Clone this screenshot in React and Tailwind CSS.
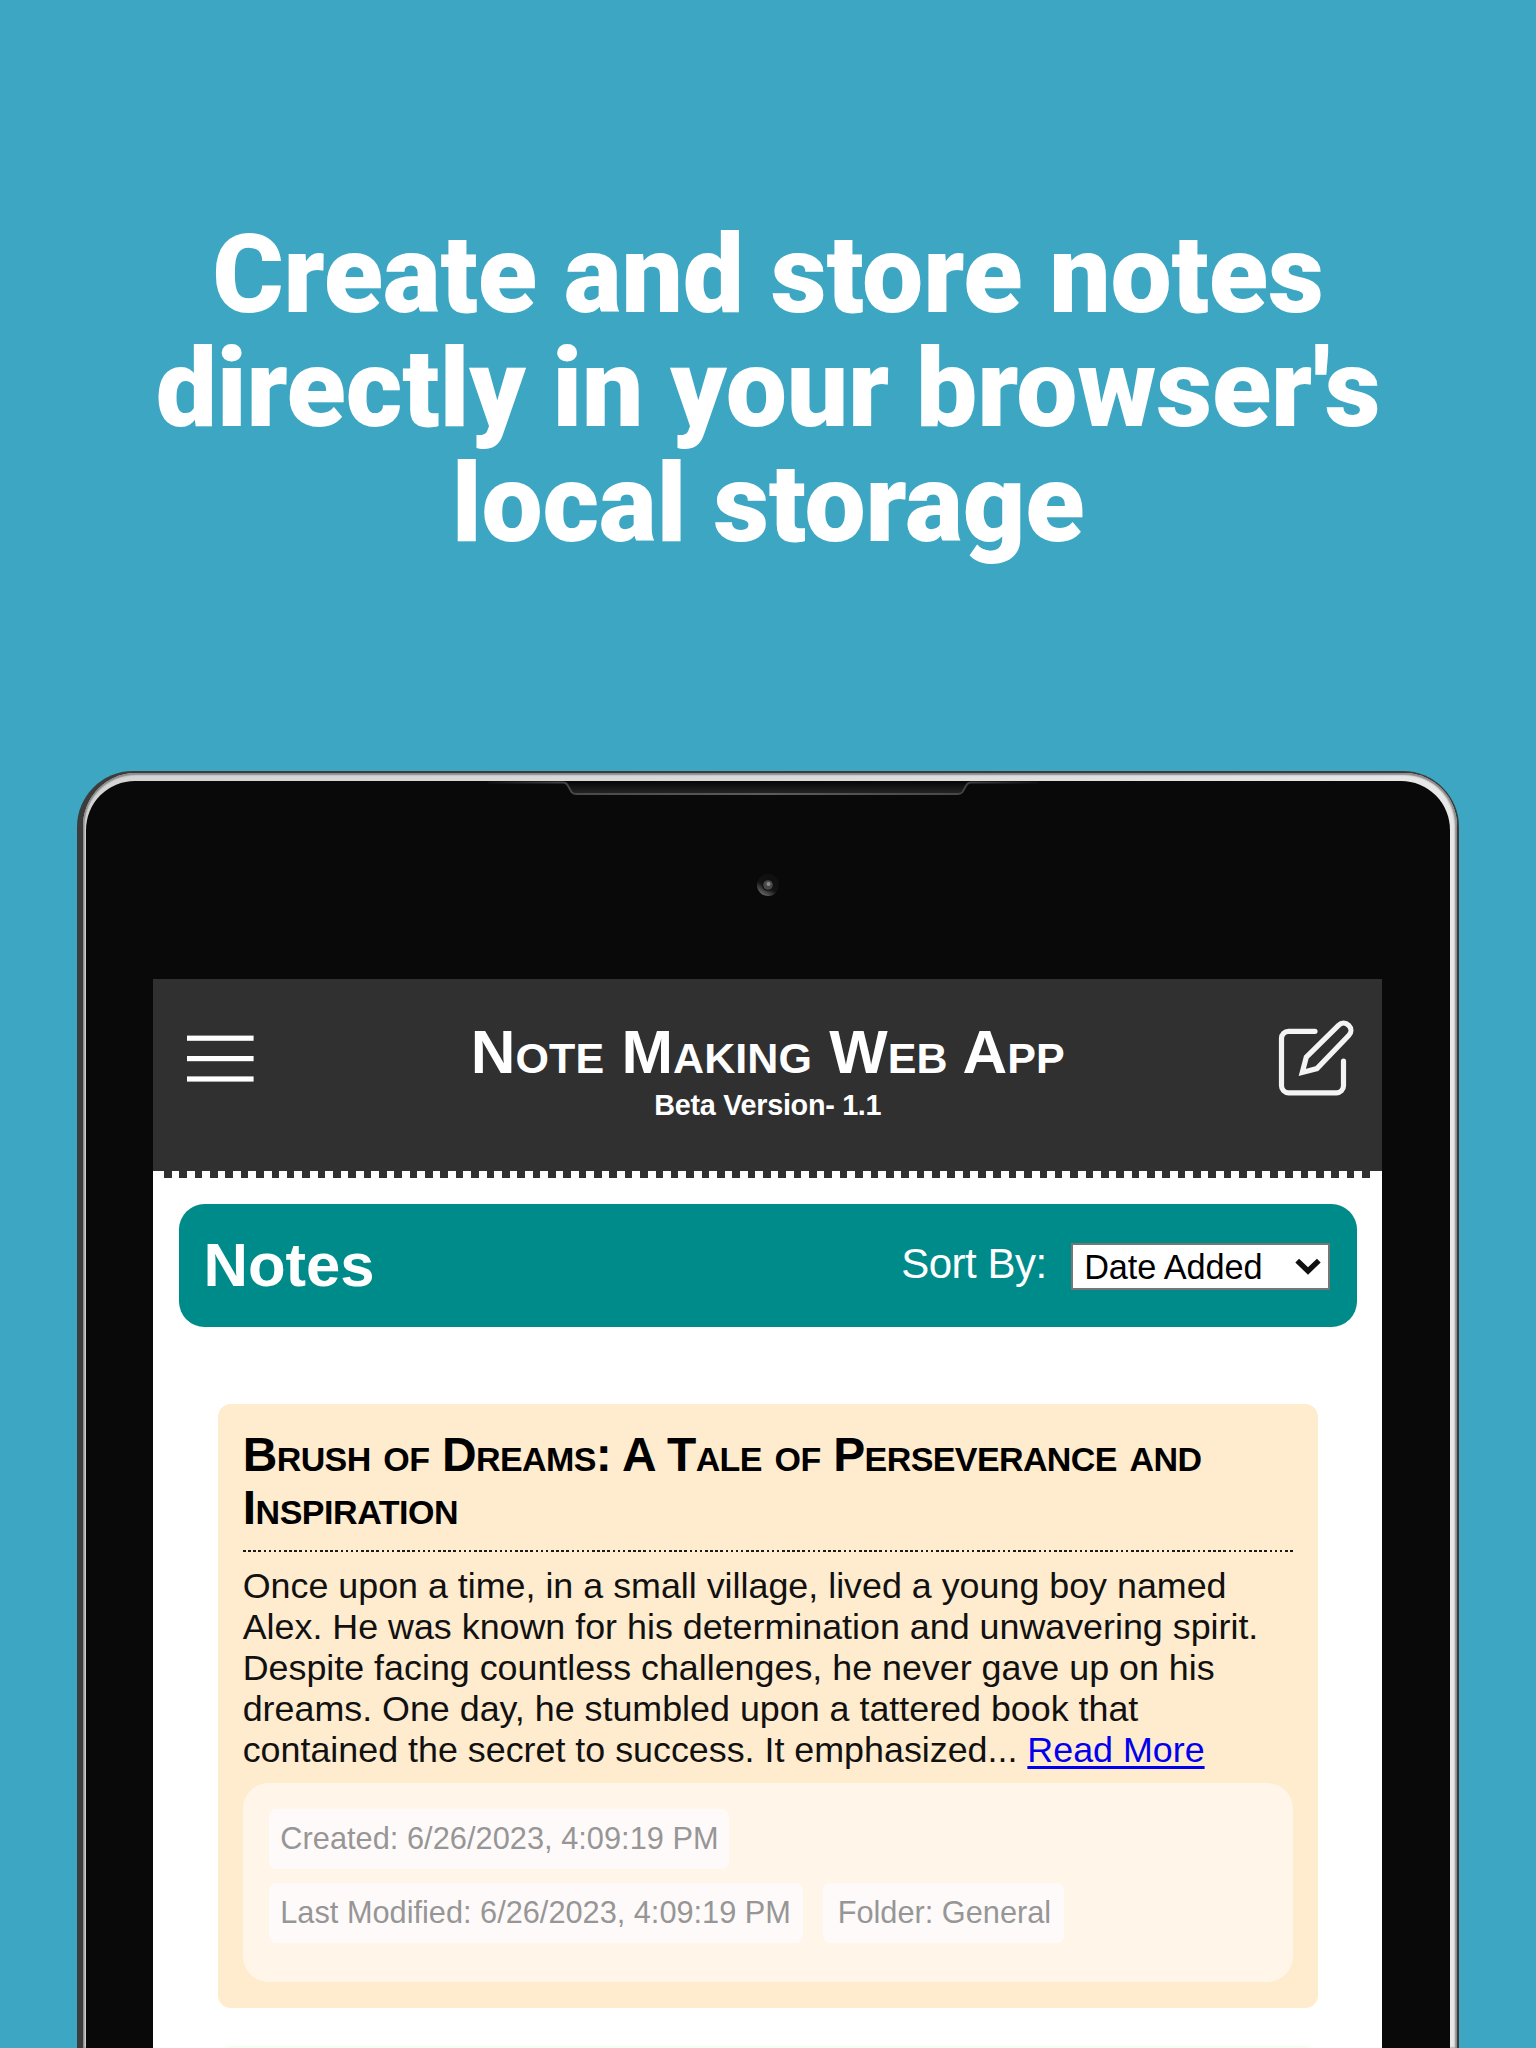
function MenuIcon() {
  return (
    <svg className="ml-[6px] mt-[54px] h-[50px] w-[67px]" viewBox="0 0 67 50" fill="#fff">
      <rect x="0" y="2.6" width="66.6" height="5.2" />
      <rect x="0" y="23" width="66.6" height="5.2" />
      <rect x="0" y="43.4" width="66.6" height="5.2" />
    </svg>
  );
}

function EditIcon() {
  return (
    <svg
      className="mt-[39px] h-[80px] w-[80px] justify-self-end"
      viewBox="0 0 80 80"
      fill="none"
      stroke="#f4f4f4"
      strokeWidth="5.2"
      strokeLinecap="round"
      strokeLinejoin="round"
    >
      <path d="M41 13.3H14.5a7 7 0 0 0-7 7V67.8a7 7 0 0 0 7 7H62.5a7 7 0 0 0 7-7V43" />
      <path strokeLinejoin="miter" d="M28.3 54.4l4-15.2L64.5 7.3c2.9-2.9 7.2-2.9 10.2 0s2.9 7.2 0 10.2L42.9 50.6z" />
    </svg>
  );
}

function Header() {
  return (
    <header className="bg-[#303030] text-white">
      <div className="grid h-[192px] grid-cols-[80px_1fr_80px] items-start px-[28px]">
        <MenuIcon />
        <div className="pt-[41.3px] text-center font-bold whitespace-nowrap">
          <h1 className="text-[61.9px] leading-[64px] tracking-[0.07px] [font-variant-caps:small-caps]">
            Note Making Web App
          </h1>
          <p className="mt-[5px] text-[28.8px] leading-[32px] tracking-[-0.3px]">Beta Version- 1.1</p>
        </div>
        <EditIcon />
      </div>
      <div className="h-[7.7px] bg-white px-[10.2px]">
        <div className="h-full w-[1206px] bg-[repeating-linear-gradient(90deg,#303030_0_7.6px,#fff_7.6px_15.36px)]" />
      </div>
    </header>
  );
}

function Toolbar() {
  return (
    <div className="mx-[25.6px] mt-[25.6px] flex h-[123.3px] items-center justify-between rounded-[25.6px] bg-[#008b8b] pr-[26.5px] pb-[2px] pl-[24.5px] text-white">
      <h2 className="text-[61.6px] leading-[64px] font-bold">Notes</h2>
      <div className="flex items-center gap-6">
        <span className="pb-[1px] text-[42px] leading-[48px] tracking-[-0.5px]">Sort By:</span>
        <div className="mt-[4px] flex h-[47px] w-[259.5px] items-center justify-between border-[2.5px] border-[#767676] bg-white pr-[7px] pl-[11.5px] text-[34.3px] leading-[40px] tracking-[-0.1px] text-black">
          <span>Date Added</span>
          <svg className="h-[18px] w-[26px]" viewBox="0 0 26 18" fill="none" stroke="#111" strokeWidth="5.4">
            <path d="M2.2 2.6L13 13L23.8 2.6" />
          </svg>
        </div>
      </div>
    </div>
  );
}

function NoteCard() {
  return (
    <article className="mx-[64.3px] mt-[76.4px] rounded-[13px] bg-[#ffebcd] px-[25px] pt-[24px] pb-[26px] whitespace-nowrap text-black">
      <h3 className="text-[47.9px] leading-[53.5px] font-bold [font-variant-caps:small-caps]">
        <span className="block tracking-[-0.6px]">Brush of Dreams: A Tale of Perseverance and</span>
        <span className="block tracking-[-0.45px]">Inspiration</span>
      </h3>
      <div className="mt-[15px] h-[2.6px] bg-[repeating-linear-gradient(90deg,#1c1a17_0_2.56px,transparent_2.56px_5.133px)]" />
      <p className="mt-[13.8px] text-[35.84px] leading-[40.9px] text-[#111]">
        Once upon a time, in a small village, lived a young boy named
        <br />
        Alex. He was known for his determination and unwavering spirit.
        <br />
        Despite facing countless challenges, he never gave up on his
        <br />
        dreams. One day, he stumbled upon a tattered book that
        <br />
        contained the secret to success. It emphasized...{" "}
        <a className="text-[#0000ee] underline decoration-[2.6px] underline-offset-[3.5px]">Read More</a>
      </p>
      <div className="mt-[12px] flex h-[199.3px] flex-wrap content-start gap-x-[20.5px] gap-y-[13.8px] rounded-[25.6px] bg-[#fff5e9] px-[26px] pt-[26px] text-[30.72px] leading-[60.5px] text-[#969696]">
        <div className="w-full">
          <span className="inline-block rounded-[7.7px] bg-[#fffafa] pr-[10.5px] pl-[11.6px] align-top tracking-[0.04px]">
            Created: 6/26/2023, 4:09:19 PM
          </span>
        </div>
        <span className="rounded-[7.7px] bg-[#fffafa] pr-[12px] pl-[11.6px]">
          Last Modified: 6/26/2023, 4:09:19 PM
        </span>
        <span className="rounded-[7.7px] bg-[#fffafa] pr-[13px] pl-[14.3px]">Folder: General</span>
      </div>
    </article>
  );
}

function Bezel() {
  return (
    <svg className="absolute top-0 left-[382px] h-[120px] w-[600px]" viewBox="0 0 600 120" fill="none">
      <defs>
        <linearGradient id="edge" x1="0" x2="1" y1="0" y2="0">
          <stop offset="0" stopColor="#111" />
          <stop offset="0.15" stopColor="#484848" />
          <stop offset="0.5" stopColor="#5c5c5c" />
          <stop offset="0.85" stopColor="#484848" />
          <stop offset="1" stopColor="#111" />
        </linearGradient>
        <linearGradient id="slot" x1="0" x2="0" y1="0" y2="1">
          <stop offset="0" stopColor="#090909" />
          <stop offset="1" stopColor="#262626" />
        </linearGradient>
        <linearGradient id="ring" x1="0.25" x2="0.6" y1="0.95" y2="0.35">
          <stop offset="0" stopColor="#686868" />
          <stop offset="0.6" stopColor="#141414" />
          <stop offset="1" stopColor="#101010" />
        </linearGradient>
      </defs>
      <path d="M97 1.5L105 13H491L503 1.5Z" fill="url(#slot)" />
      <path
        d="M20 1.5H95Q98 1.5 99.5 4L103.5 11Q105 13 108 13H490Q493 13 494.5 11L498.5 4Q500 1.5 503 1.5H570"
        stroke="url(#edge)"
        strokeWidth="2"
      />
      <circle cx="300" cy="104" r="11" fill="url(#ring)" />
      <circle cx="300" cy="104" r="6" fill="#111" />
      <circle cx="300" cy="104" r="4.8" fill="#484848" />
      <circle cx="300.5" cy="103" r="2" fill="#8a8a8a" />
    </svg>
  );
}

export default function App() {
  return (
    <main className="flex h-[2048px] w-[1536px] flex-col overflow-hidden bg-[#3ca6c3] [font-family:'Liberation_Sans',Arial,sans-serif]">
      <h1 className="h-[771px] shrink-0 pt-[218px] text-center text-[108.9px] leading-[114.4px] font-black tracking-[-0.18px] whitespace-nowrap text-white [font-family:Roboto,sans-serif]">
        Create and store notes
        <br />
        directly in your browser's
        <br />
        local storage
      </h1>
      <div className="mr-[76.7px] ml-[77px] h-[1277px] overflow-hidden rounded-t-[56px] bg-[#3c3c3c] pt-[1.5px] pr-[2.3px] pl-[5.5px]">
        <div className="h-full rounded-t-[53px] bg-linear-to-r from-[#d4d4d4] via-[#dadada] to-[#e8e8e8] pt-[8px] pr-[7px] pl-[3.5px] shadow-[inset_0_2px_1.5px_#8a8a8a,inset_-2px_0_2px_#8a8a8a,inset_1.5px_0_1.5px_#8a8a8a]">
          <div className="relative h-full rounded-t-[49px] bg-[#090909] pt-[198.2px] pr-[67.8px] pl-[67.4px]">
            <Bezel />
            <div className="h-full bg-white">
              <Header />
              <Toolbar />
              <NoteCard />
              <div className="mx-[64.3px] mt-[38.4px] h-[40px] rounded-t-[13px] bg-[#f0fff0]" />
            </div>
          </div>
        </div>
      </div>
    </main>
  );
}
